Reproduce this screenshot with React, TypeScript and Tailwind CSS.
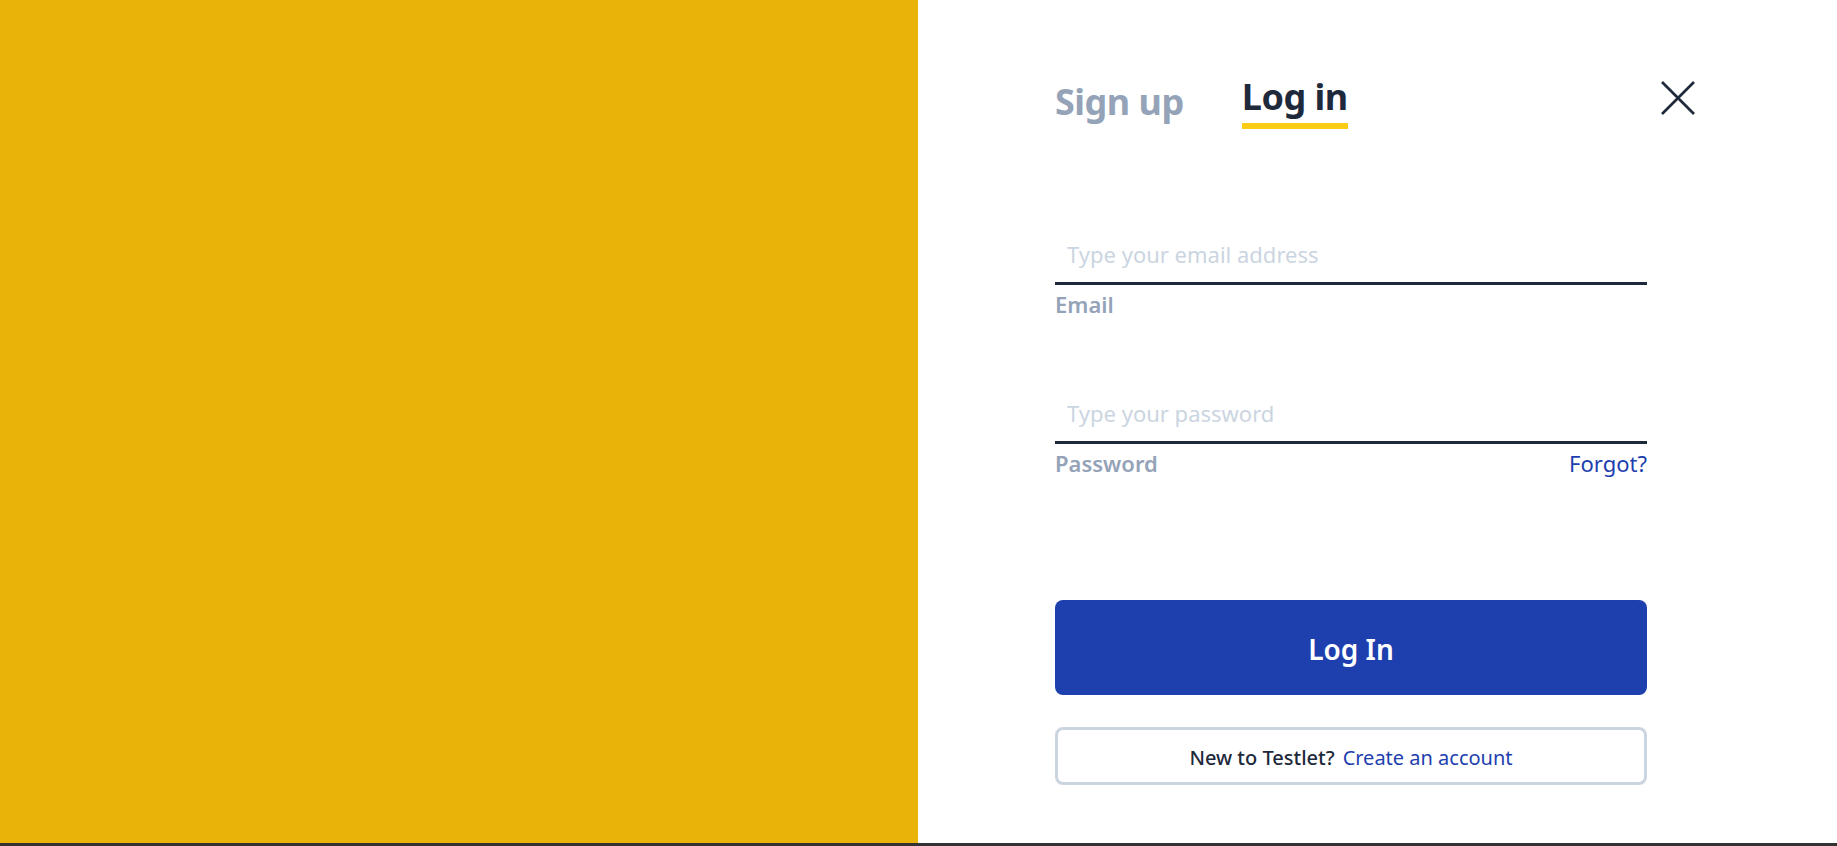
const font = { fontFamily: '"Noto Sans", "Open Sans", sans-serif' };

const CloseIcon = () => (
  <svg width="34" height="34" viewBox="0 0 34 34" fill="none" stroke="#1e293b" strokeWidth="2.6">
    <line x1="1" y1="1" x2="33" y2="33" />
    <line x1="33" y1="1" x2="1" y2="33" />
  </svg>
);

const App = () => {
  return (
    <div className="flex flex-col w-full h-[846px] bg-[#333333]" style={font}>
      <div className="flex h-[843px]">
        <div className="w-[918px] h-full bg-[#eab308]" />

        <div className="flex-1 h-full bg-white pl-[137px]">
          {/* tabs */}
          <div className="flex items-start justify-between w-[640px] pt-[79px]">
            <div className="flex items-start gap-[58px]">
              <button className="mt-[5px] text-[36px] leading-[36px] font-bold text-[#94a3b8] tracking-[-0.5px]">
                Sign up
              </button>
              <button className="text-[36px] leading-[36px] font-bold text-[#1e293b] pb-[8px] border-b-[6px] border-[#facc15] tracking-[-0.5px]">
                Log in
              </button>
            </div>
            <button className="mt-[2px]">
              <CloseIcon />
            </button>
          </div>

          {/* form */}
          <form className="w-[592px] flex flex-col mt-[96px]">
            <input
              type="email"
              placeholder="Type your email address"
              className="h-[60px] w-full pl-3 text-[22px] text-[#1e293b] placeholder:text-[#cbd5e1] border-b-[3px] border-[#1e293b] outline-none"
            />
            <label className="mt-[5px] text-[22px] leading-[28px] font-semibold text-[#94a3b8]">Email</label>

            <input
              type="password"
              placeholder="Type your password"
              className="mt-[66px] h-[60px] w-full pl-3 text-[22px] text-[#1e293b] placeholder:text-[#cbd5e1] border-b-[3px] border-[#1e293b] outline-none"
            />
            <div className="mt-[5px] flex justify-between items-center">
              <label className="text-[22px] leading-[28px] font-semibold text-[#94a3b8]">Password</label>
              <a className="text-[22px] leading-[28px] text-[#1e40af]">Forgot?</a>
            </div>

            <button
              type="button"
              className="mt-[123px] h-[95px] w-full rounded-lg bg-[#1e40af] text-white text-[28px] font-semibold pt-[2px]"
            >
              Log In
            </button>

            <div className="mt-[32px] h-[58px] w-full border-[3px] border-[#cbd5e1] rounded-lg flex items-center justify-center gap-2 text-[20px] pt-[3px]">
              <span className="font-medium text-[#1e293b]">New to Testlet?</span>
              <a className="text-[#1e40af]">Create an account</a>
            </div>
          </form>
        </div>
      </div>
    </div>
  );
};

export default App;
